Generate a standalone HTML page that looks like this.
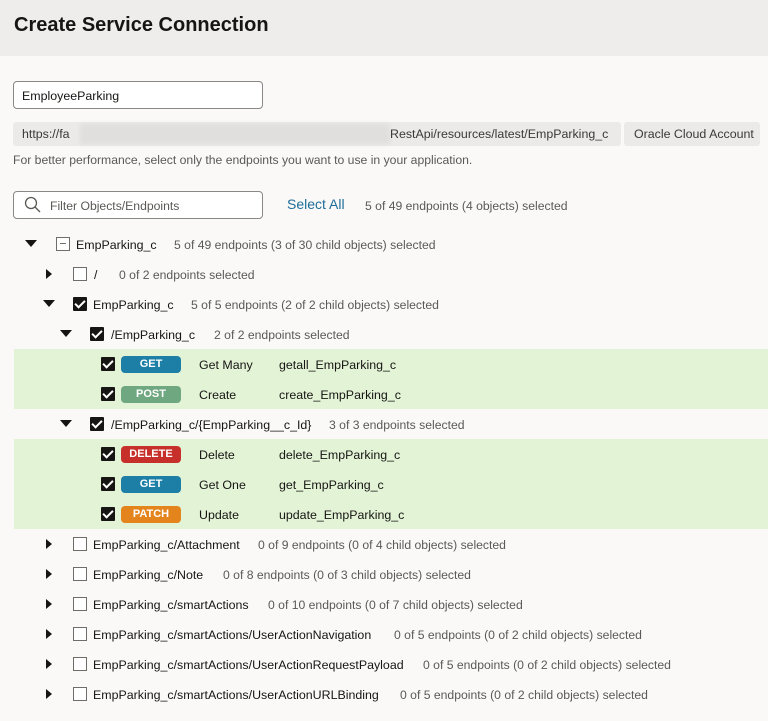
<html><head><style>
body{margin:0;width:768px;height:721px;background:#faf9f8;font-family:"Liberation Sans",sans-serif;color:#161513;position:relative;overflow:hidden}
.hdr{position:absolute;left:0;top:0;width:768px;height:56px;background:#eeedec}
.hdr h1{position:absolute;left:14px;top:14px;margin:0;font-size:20px;font-weight:bold;color:#161513}
.a{position:absolute;white-space:nowrap;line-height:14px}
.t{font-size:12.4px}
.g{color:#5b5955;font-size:12.2px}
.box{position:absolute;border:1px solid #8a8885;border-radius:4px;background:#fff}
.tri{position:absolute;width:0;height:0}
.dn{border-left:6px solid transparent;border-right:6px solid transparent;border-top:7px solid #161513}
.rt{border-top:5px solid transparent;border-bottom:5px solid transparent;border-left:6px solid #161513}
.cb{position:absolute;width:12px;height:12px;border:1px solid #6f6d6a;background:#fff}
.ck{position:absolute;width:14px;height:14px;background:#161513;border-radius:1px}
.ck:after{content:"";position:absolute;left:4px;top:1px;width:4px;height:8px;border:solid #fff;border-width:0 2px 2px 0;transform:rotate(45deg)}
.green{position:absolute;left:14px;width:754px;background:#e3f3d6}
.b{position:absolute;left:121px;width:60px;height:17px;border-radius:4px;color:#fff;font-size:11px;font-weight:bold;text-align:center;line-height:17px}
</style></head><body>
<div class="hdr"><h1>Create Service Connection</h1></div>
<div class="box" style="left:13px;top:81px;width:248px;height:26px"></div>
<div class="a t" style="left:22px;top:89px">EmployeeParking</div>
<div class="a" style="left:13px;top:122px;width:608px;height:24px;background:#ebeae8;border-radius:3px"></div>
<div class="a" style="left:80px;top:124px;width:310px;height:20px;background:#e0dfdd;filter:blur(2px)"></div>
<div class="a t" style="left:22px;top:127px;color:#3a3936">https://fa</div>
<div class="a t" style="left:390px;top:127px;color:#3a3936">RestApi/resources/latest/EmpParking_c</div>
<div class="a" style="left:624px;top:122px;width:136px;height:24px;background:#ebeae8;border-radius:3px"></div>
<div class="a t" style="left:634px;top:127px;color:#3a3936">Oracle Cloud Account</div>
<div class="a g" style="left:13px;top:153px">For better performance, select only the endpoints you want to use in your application.</div>
<div class="box" style="left:13px;top:191px;width:248px;height:26px"></div>
<svg class="a" style="left:24px;top:196px" width="18" height="18"><circle cx="7" cy="7" r="5.5" fill="none" stroke="#5b5955" stroke-width="1.3"/><line x1="11" y1="11" x2="16" y2="16" stroke="#5b5955" stroke-width="1.3"/></svg>
<div class="a g" style="left:50px;top:199px">Filter Objects/Endpoints</div>
<div class="a" style="left:287px;top:197px;font-size:14px;color:#1f6d9a">Select All</div>
<div class="a g" style="left:365px;top:199px">5 of 49 endpoints (4 objects) selected</div>

<div class="green" style="top:349px;height:60px"></div>
<div class="green" style="top:439px;height:90px"></div>

<div class="tri dn" style="left:25px;top:240px"></div>
<div class="cb" style="left:56px;top:237px"></div><div class="a" style="left:60px;top:243px;width:6px;height:1px;background:#6f6d6a"></div>
<div class="a t" style="left:76px;top:238px">EmpParking_c</div><div class="a g" style="left:174px;top:238px">5 of 49 endpoints (3 of 30 child objects) selected</div>
<div class="tri rt" style="left:46px;top:269px"></div><div class="cb" style="left:73px;top:267px"></div>
<div class="a t" style="left:94px;top:268px">/</div><div class="a g" style="left:119px;top:268px">0 of 2 endpoints selected</div>
<div class="tri dn" style="left:43px;top:300px"></div><div class="ck" style="left:73px;top:297px"></div>
<div class="a t" style="left:93px;top:298px">EmpParking_c</div><div class="a g" style="left:191px;top:298px">5 of 5 endpoints (2 of 2 child objects) selected</div>
<div class="tri dn" style="left:60px;top:330px"></div><div class="ck" style="left:90px;top:327px"></div>
<div class="a t" style="left:111px;top:328px">/EmpParking_c</div><div class="a g" style="left:214px;top:328px">2 of 2 endpoints selected</div>
<div class="ck" style="left:101px;top:357px"></div><div class="b" style="top:356px;background:#1d7ea6">GET</div><div class="a t" style="left:199px;top:358px">Get Many</div><div class="a t" style="left:279px;top:358px">getall_EmpParking_c</div>
<div class="ck" style="left:101px;top:387px"></div><div class="b" style="top:386px;background:#6fa880">POST</div><div class="a t" style="left:199px;top:388px">Create</div><div class="a t" style="left:279px;top:388px">create_EmpParking_c</div>
<div class="tri dn" style="left:60px;top:420px"></div><div class="ck" style="left:90px;top:417px"></div>
<div class="a t" style="left:111px;top:418px">/EmpParking_c/{EmpParking__c_Id}</div><div class="a g" style="left:329px;top:418px">3 of 3 endpoints selected</div>
<div class="ck" style="left:101px;top:447px"></div><div class="b" style="top:446px;background:#c7302a">DELETE</div><div class="a t" style="left:199px;top:448px">Delete</div><div class="a t" style="left:279px;top:448px">delete_EmpParking_c</div>
<div class="ck" style="left:101px;top:477px"></div><div class="b" style="top:476px;background:#1d7ea6">GET</div><div class="a t" style="left:199px;top:478px">Get One</div><div class="a t" style="left:279px;top:478px">get_EmpParking_c</div>
<div class="ck" style="left:101px;top:507px"></div><div class="b" style="top:506px;background:#e3851c">PATCH</div><div class="a t" style="left:199px;top:508px">Update</div><div class="a t" style="left:279px;top:508px">update_EmpParking_c</div>
<div class="tri rt" style="left:46px;top:539px"></div><div class="cb" style="left:73px;top:537px"></div><div class="a t" style="left:93px;top:538px">EmpParking_c/Attachment</div><div class="a g" style="left:258px;top:538px">0 of 9 endpoints (0 of 4 child objects) selected</div>
<div class="tri rt" style="left:46px;top:569px"></div><div class="cb" style="left:73px;top:567px"></div><div class="a t" style="left:93px;top:568px">EmpParking_c/Note</div><div class="a g" style="left:223px;top:568px">0 of 8 endpoints (0 of 3 child objects) selected</div>
<div class="tri rt" style="left:46px;top:599px"></div><div class="cb" style="left:73px;top:597px"></div><div class="a t" style="left:93px;top:598px">EmpParking_c/smartActions</div><div class="a g" style="left:268px;top:598px">0 of 10 endpoints (0 of 7 child objects) selected</div>
<div class="tri rt" style="left:46px;top:629px"></div><div class="cb" style="left:73px;top:627px"></div><div class="a t" style="left:93px;top:628px">EmpParking_c/smartActions/UserActionNavigation</div><div class="a g" style="left:394px;top:628px">0 of 5 endpoints (0 of 2 child objects) selected</div>
<div class="tri rt" style="left:46px;top:659px"></div><div class="cb" style="left:73px;top:657px"></div><div class="a t" style="left:93px;top:658px">EmpParking_c/smartActions/UserActionRequestPayload</div><div class="a g" style="left:423px;top:658px">0 of 5 endpoints (0 of 2 child objects) selected</div>
<div class="tri rt" style="left:46px;top:689px"></div><div class="cb" style="left:73px;top:687px"></div><div class="a t" style="left:93px;top:688px">EmpParking_c/smartActions/UserActionURLBinding</div><div class="a g" style="left:400px;top:688px">0 of 5 endpoints (0 of 2 child objects) selected</div>
</body></html>
